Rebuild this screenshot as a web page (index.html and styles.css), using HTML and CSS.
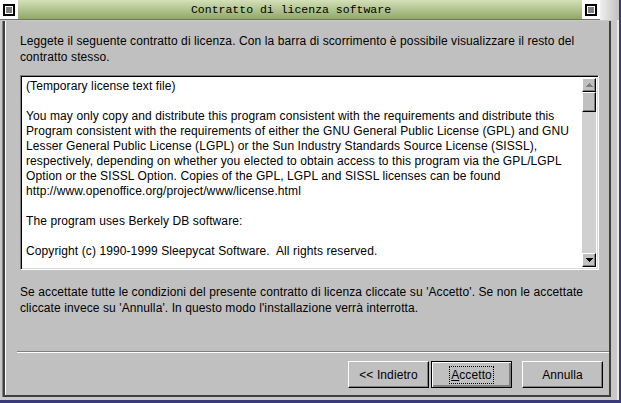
FILE: index.html
```html
<!DOCTYPE html>
<html lang="it">
<head>
<meta charset="utf-8">
<title>Contratto di licenza software</title>
<link rel="stylesheet" href="styles.css">
</head>
<body>
<div class="window">
  <div class="titlebar">
    <div class="tbtn"><span class="tbox"></span></div>
    <div class="title">Contratto di licenza software</div>
    <div class="tbtn"><span class="tbox"></span></div>
    <div class="tcorner"></div>
  </div>
  <div class="frame">
    <div class="client">
      <p class="intro">Leggete il seguente contratto di licenza. Con la barra di scorrimento è possibile visualizzare il resto del<br>contratto stesso.</p>
      <div class="textbox">
        <div class="text">
          <p>(Temporary license text file)</p>
          <p>You may only copy and distribute this program consistent with the requirements and distribute this<br>Program consistent with the requirements of either the GNU General Public License (GPL) and GNU<br>Lesser General Public License (LGPL) or the Sun Industry Standards Source License (SISSL),<br>respectively, depending on whether you elected to obtain access to this program via the GPL/LGPL<br>Option or the SISSL Option. Copies of the GPL, LGPL and SISSL licenses can be found<br>http://www.openoffice.org/project/www/license.html</p>
          <p>The program uses Berkely DB software:</p>
          <p>Copyright (c) 1990-1999 Sleepycat Software.&nbsp; All rights reserved.</p>
        </div>
        <div class="scrollbar">
          <div class="sbtn"><svg width="7" height="4" viewBox="0 0 7 4"><path d="M3 0h1v1h1v1h1v1h1v1H0V3h1V2h1V1h1z" fill="#808080"/></svg></div>
          <div class="thumb"></div>
          <div class="track"></div>
          <div class="sbtn"><svg width="7" height="4" viewBox="0 0 7 4"><path d="M0 0h7v1H6v1H5v1H4v1H3V3H2V2H1V1H0z" fill="#000"/></svg></div>
        </div>
      </div>
      <p class="outro">Se accettate tutte le condizioni del presente contratto di licenza cliccate su 'Accetto'. Se non le accettate<br>cliccate invece su 'Annulla'. In questo modo l'installazione verrà interrotta.</p>
      <div class="spacer"></div>
      <div class="sep"></div>
      <div class="buttons">
        <div class="btn">&lt;&lt; Indietro</div>
        <div class="btn default"><span class="focus"><u>A</u>ccetto</span></div>
        <div class="btn cancel">Annulla</div>
      </div>
    </div>
  </div>
</div>
</body>
</html>
```
FILE: styles.css
```css
html, body {
  margin: 0;
  padding: 0;
}
body {
  width: 621px;
  height: 403px;
  background: #3a3a7a;
  font-family: "Liberation Sans", Arial, sans-serif;
  font-size: 12px;
  letter-spacing: 0.1px;
  color: #000;
  overflow: hidden;
}
.window {
  width: 619px;
  height: 400px;
  display: flex;
  flex-direction: column;
  background: #c8c8c8;
}
.titlebar {
  height: 20px;
  display: flex;
  flex: none;
}
.tbtn {
  width: 18px;
  height: 20px;
  background: #fff;
  display: flex;
  align-items: center;
  justify-content: center;
  box-sizing: border-box;
  border-bottom: 1px solid #707070;
}
.tbox {
  width: 8px;
  height: 8px;
  border: 2px solid #000;
  background: #808080;
  box-shadow: inset 0 0 0 1px #fff;
}
.title {
  flex: 1;
  padding-right: 18px;
  background: linear-gradient(#d4e0b8, #90a868);
  font-family: "Liberation Mono", "DejaVu Sans Mono", monospace;
  font-size: 11.5px;
  letter-spacing: 0;
  text-align: center;
  line-height: 20px;
  border-bottom: 1px solid #6a7a50;
  box-sizing: border-box;
}
.tcorner {
  width: 19px;
  background: linear-gradient(90deg, #f0f0f0, #c0c0c0);
}
.frame {
  flex: 1;
  display: flex;
  padding: 1px 6px 3px 3px;
  background: #c8c8c8;
  border-right: 2px solid #e8e8e8;
}
.client {
  flex: 1;
  display: flex;
  flex-direction: column;
  border-left: 2px solid #404040;
  border-bottom: 2px solid #404040;
  border-right: 2px solid #404040;
  background: #c0c0c0;
  padding: 0 6px 7px 15px;
  box-shadow: inset 1px 0 0 #fff, -1px 0 0 #808080;
}
.intro {
  margin: 12px 0 0;
  line-height: 16px;
  white-space: nowrap;
}
.textbox {
  margin: 10px 4px 0 0;
  height: 189px;
  display: flex;
  border-top: 1px solid #808080;
  border-left: 1px solid #808080;
  border-right: 1px solid #fff;
  border-bottom: 1px solid #fff;
  box-shadow: inset 1px 1px 0 #000, inset -1px -1px 0 #d8d8d8;
  background: #fff;
  padding: 2px;
}
.text {
  flex: 1;
  padding: 1px 4px 0 3px;
  overflow: hidden;
  line-height: 15px;
  white-space: nowrap;
}
.text p {
  margin: 0 0 15px;
}
.scrollbar {
  width: 14px;
  display: flex;
  flex-direction: column;
  background: #d0d0d0;
}
.sbtn, .thumb {
  height: 14px;
  box-sizing: border-box;
  background: #c0c0c0;
  border-top: 1px solid #fff;
  border-left: 1px solid #fff;
  border-right: 1px solid #000;
  border-bottom: 1px solid #000;
  box-shadow: inset -1px -1px 0 #808080;
  display: flex;
  align-items: center;
  justify-content: center;
}
.thumb {
  height: 20px;
}
.track {
  flex: 1;
}
.outro {
  margin: 14px 0 0;
  line-height: 16px;
  white-space: nowrap;
}
.spacer {
  flex: 1;
}
.sep {
  margin: 0 -6px 0 -3px;
  border-top: 1px solid #808080;
  border-bottom: 1px solid #fff;
}
.buttons {
  margin-top: 8px;
  display: flex;
  justify-content: flex-end;
  gap: 2px;
}
.btn {
  width: 81px;
  height: 27px;
  box-sizing: border-box;
  background: #c0c0c0;
  border-top: 1px solid #fff;
  border-left: 1px solid #fff;
  border-right: 1px solid #000;
  border-bottom: 1px solid #000;
  box-shadow: inset -1px -1px 0 #808080;
  display: flex;
  align-items: center;
  justify-content: center;
}
.btn.default {
  border: 1px solid #000;
  box-shadow: inset 1px 1px 0 #fff, inset -2px -2px 0 #808080, inset -1px -1px 0 #000;
}
.focus {
  outline: 1px dotted #000;
  padding: 1px 1px;
}
.btn.cancel {
  margin-left: 8px;
}
```
